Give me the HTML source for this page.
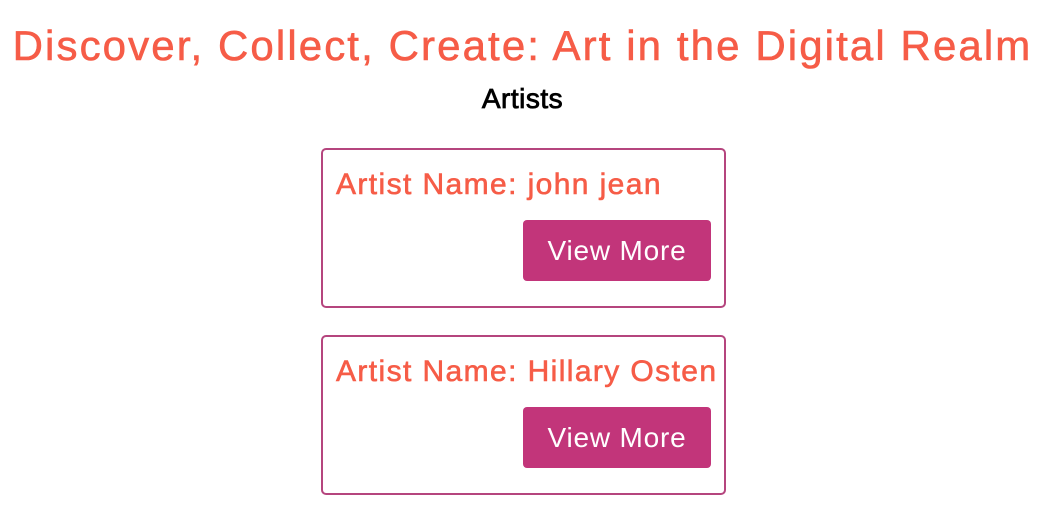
<!DOCTYPE html>
<html><head><style>
body{margin:0;background:#fff;font-family:"Liberation Sans",sans-serif;width:1045px;height:526px;overflow:hidden}
h1{margin:0;position:absolute;top:20px;left:0;width:1045px;text-align:center;color:#f65c47;font-weight:normal;font-size:42px;letter-spacing:2.1px;line-height:52px;-webkit-text-stroke:0.6px #f65c47}
h2{margin:0;position:absolute;top:82px;left:0;width:1045px;text-align:center;color:#000;font-weight:normal;font-size:28px;line-height:34px;letter-spacing:.5px;-webkit-text-stroke:0.8px #000}
.card{position:absolute;left:321px;width:401px;height:156px;border:2px solid #b5457e;border-radius:5px}
.card .t{position:absolute;left:13px;top:18px;color:#f65c47;font-size:30px;line-height:34px;letter-spacing:1.4px;white-space:nowrap;-webkit-text-stroke:0.6px #f65c47}
.card .b{position:absolute;left:200px;top:70px;width:188px;height:61px;background:#c2357a;border-radius:4px;color:#fff;font-size:28px;line-height:61px;text-align:center;letter-spacing:.8px}
</style></head><body>
<h1>Discover, Collect, Create: Art in the Digital Realm</h1>
<h2>Artists</h2>
<div class="card" style="top:148px"><div class="t">Artist Name: john jean</div><div class="b">View More</div></div>
<div class="card" style="top:335px"><div class="t">Artist Name: Hillary Osten</div><div class="b">View More</div></div>
</body></html>
